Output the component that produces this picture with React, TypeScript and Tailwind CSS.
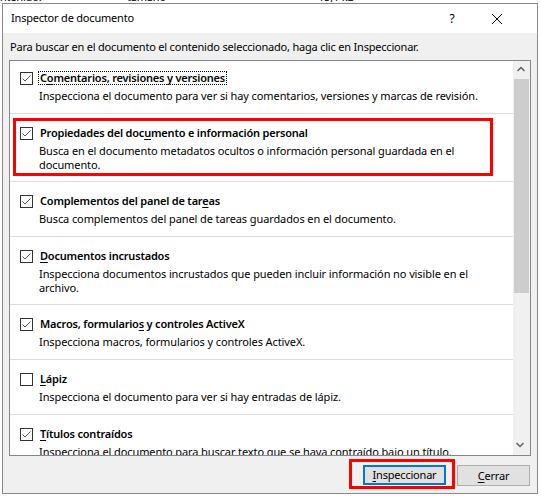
import React from "react";

type Item = {
  title: [string, string, string];
  desc: string[];
  checked?: boolean;
  focus?: boolean;
  highlight?: boolean;
};

const items: Item[] = [
  {
    title: ["C", "o", "mentarios, revisiones y versiones"],
    desc: ["Inspecciona el documento para ver si hay comentarios, versiones y marcas de revisión."],
    checked: true,
    focus: true,
  },
  {
    title: ["Propiedades del doc", "u", "mento e información personal"],
    desc: [
      "Busca en el documento metadatos ocultos o información personal guardada en el",
      "documento.",
    ],
    checked: true,
    highlight: true,
  },
  {
    title: ["Complementos del panel de tar", "e", "as"],
    desc: ["Busca complementos del panel de tareas guardados en el documento."],
    checked: true,
  },
  {
    title: ["", "D", "ocumentos incrustados"],
    desc: [
      "Inspecciona documentos incrustados que pueden incluir información no visible en el",
      "archivo.",
    ],
    checked: true,
  },
  {
    title: ["Macros, formulario", "s", " y controles ActiveX"],
    desc: ["Inspecciona macros, formularios y controles ActiveX."],
    checked: true,
  },
  {
    title: ["", "L", "ápiz"],
    desc: ["Inspecciona el documento para ver si hay entradas de lápiz."],
    checked: false,
  },
  {
    title: ["", "T", "ítulos contraídos"],
    desc: ["Inspecciona el documento para buscar texto que se haya contraído bajo un título."],
    checked: true,
  },
];

const CheckBox = ({ checked }: { checked?: boolean }) => (
  <svg width="13" height="13" viewBox="0 0 13 13" className="shrink-0">
    <rect x="0.5" y="0.5" width="12" height="12" fill="#fff" stroke="#333" />
    {checked && (
      <polyline points="2.5,6.5 5,9 10.5,3.5" fill="none" stroke="#555" strokeWidth="1" />
    )}
  </svg>
);

const InspectorRow = ({ item, first }: { item: Item; first: boolean }) => {
  const [a, u, b] = item.title;
  const twoLines = item.desc.length > 1;
  return (
    <div
      className={`relative border-b border-[#dcdcdc] pl-[10px] ${twoLines ? "pb-[9px]" : "pb-[10px]"} ${
        first ? "pt-[9px]" : "pt-[11px]"
      }`}
    >
      {item.highlight && (
        <div className="absolute left-[3px] top-[4px] w-[480px] h-[58px] border-[3px] border-[#ff0000]" />
      )}
      <div className="flex items-center h-[16px]">
        <CheckBox checked={item.checked} />
        {item.focus ? (
          <span className="ml-[5px] px-[1px] border border-dotted border-black leading-[12px] font-semibold whitespace-nowrap">
            {a}
            <u className="underline-offset-2">{u}</u>
            {b}
          </span>
        ) : (
          <span className="ml-[7px] leading-[16px] font-semibold whitespace-nowrap">
            {a}
            <u className="underline-offset-2">{u}</u>
            {b}
          </span>
        )}
      </div>
      <div className="mt-[3px] pl-[19px] leading-[14px] tracking-[-0.1px] whitespace-nowrap">
        {item.desc.map((line) => (
          <div key={line}>{line}</div>
        ))}
      </div>
    </div>
  );
};

export default function App() {
  return (
    <div className="w-[541px] h-[496px] bg-white overflow-hidden font-['Noto_Sans',sans-serif] text-[11px] tracking-[-0.2px] text-black">
      <div className="h-[3px] overflow-hidden">
        <div className="flex -mt-[9px] leading-[12px]">
          <span className="w-[127px]">ntenido:</span>
          <span className="w-[191px]">tamaño</span>
          <span>15,1 kB</span>
        </div>
      </div>

      <div className="ml-[2px] w-[536px] h-[491px] border border-[#8a8a8a] bg-[#f0f0f0] flex flex-col">
        <div className="h-[29px] bg-white flex items-center pl-[8px] pr-[35px] shrink-0">
          <span className="flex-1">Inspector de documento</span>
          <span className="w-[10px] text-center text-[12px]">?</span>
          <svg width="10" height="10" viewBox="0 0 10 10" className="ml-[35px]">
            <line x1="0" y1="0" x2="10" y2="10" stroke="#000" strokeWidth="1" />
            <line x1="10" y1="0" x2="0" y2="10" stroke="#000" strokeWidth="1" />
          </svg>
        </div>

        <div className="px-[6px] flex flex-col">
          <p className="pt-[6px] pl-[1px] leading-[16px] whitespace-nowrap">
            Para buscar en el documento el contenido seleccionado, haga clic en Inspeccionar.
          </p>

          <div className="mt-[5px] h-[396px] border border-[#828790] bg-white flex">
            <div className="flex-1 overflow-hidden">
              {items.map((item, i) => (
                <InspectorRow key={i} item={item} first={i === 0} />
              ))}
            </div>
            <div className="w-[17px] bg-[#f0f0f0] flex flex-col shrink-0">
              <svg width="17" height="17" viewBox="0 0 17 17" className="shrink-0">
                <polyline points="4.5,10 8,6.5 11.5,10" fill="none" stroke="#606060" strokeWidth="1.5" />
              </svg>
              <div className="flex-1 pt-[1px]">
                <div className="mx-[1px] h-[214px] bg-[#cdcdcd]" />
              </div>
              <svg width="17" height="17" viewBox="0 0 17 17" className="shrink-0">
                <polyline points="3.5,5 7,8.5 10.5,5" fill="none" stroke="#606060" strokeWidth="1.5" />
              </svg>
            </div>
          </div>

          <div className="mt-[3px] pr-[1px] flex justify-end items-start">
            <div className="w-[106px] h-[30px] border-[3px] border-[#ff0000] pl-[11px] pt-[3px]">
              <button className="w-[83px] h-[20px] border-2 border-[#0078d7] bg-[#e1e1e1] leading-[16px]">
                <u className="underline-offset-2">I</u>nspeccionar
              </button>
            </div>
            <button className="ml-[2px] mt-[6px] w-[73px] h-[21px] border border-[#adadad] bg-[#e1e1e1] leading-[19px]">
              <u className="underline-offset-2">C</u>errar
            </button>
          </div>
        </div>
      </div>
    </div>
  );
}
